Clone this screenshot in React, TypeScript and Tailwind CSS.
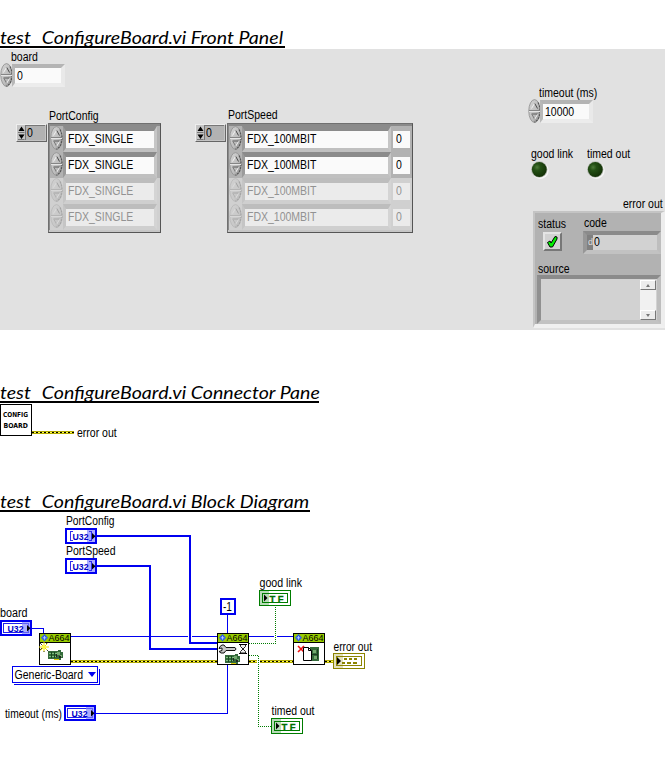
import React from "react";

const FONT = "'Liberation Sans', Arial, sans-serif";

function Label({ children, className = "" }: { children: React.ReactNode; className?: string }) {
  return (
    <span className={"block h-[14px] w-0 origin-left scale-x-[0.875] whitespace-nowrap text-[12px] leading-[14px] " + className}>
      {children}
    </span>
  );
}

function Heading({ children, className }: { children: React.ReactNode; className: string }) {
  return (
    <h2 className={"h-[20px] border-b-2 border-black " + className}>
      <span className="block h-[18px] w-0 origin-left scale-x-[1.12] whitespace-nowrap font-['Lato',sans-serif] text-[17.5px] italic leading-[20px]">
        test<span className="relative top-[2px] mr-[2px]">_</span>{children}
      </span>
    </h2>
  );
}

function Knob() {
  return (
    <svg width="13" height="24" viewBox="0 0 13 24" className="shrink-0">
      <defs>
        <linearGradient id="knob" x1="0" x2="1" y1="0.1" y2="0.9">
          <stop offset="0" stopColor="#d4d4d4" />
          <stop offset="0.6" stopColor="#bcbcbc" />
          <stop offset="1" stopColor="#858585" />
        </linearGradient>
      </defs>
      <ellipse cx="6.500" cy="12" rx="5.700" ry="11.400" fill="url(#knob)" stroke="#939393" strokeWidth=".9" />
      <path d="M10 3.500Q14 12 10 20.500L6.500 23.400" fill="none" stroke="#555" strokeWidth="1.100" strokeDasharray="2 1" />
      <path d="M1 11.500h11" stroke="#858585" />
      <path d="M1 12.500h11" stroke="#e5e5e5" />
      <path d="M3.500 9.500l3-5" stroke="#f2f2f2" />
      <path d="M6.800 4.500l2.700 5" stroke="#4a4a4a" />
      <path d="M3.500 15h6" stroke="#5a5a5a" />
      <path d="M4 15.500l2.500 4.500" stroke="#777" />
      <path d="M6.800 20l2.700-4.500" stroke="#f2f2f2" />
    </svg>
  );
}

function NumericBox({ value, className }: { value: string; className: string }) {
  return (
    <div className={"h-[23px] border-t-[4px] border-r-[4px] border-b-[4px] border-l-[3px] border-t-[#b4b4b4] border-r-[#e9e9e9] border-b-[#ececec] border-l-[#b8b8b8] bg-[#fafafa] pl-[2px] " + className}>
      <Label className="mt-[1px]">{value}</Label>
    </div>
  );
}

function IndexBox() {
  return (
    <div className="mt-px flex h-[18px] w-[31px] shrink-0 border border-t-[#eee] border-l-[#eee] border-r-[#666] border-b-[#666] bg-[#c4c4c4]">
      <svg width="8" height="16" viewBox="0 0 8 16" className="shrink-0">
        <path d="M4.500 1.500L7.500 6H1.500zM1.500 9.500h6l-3 4.500z" fill="#000" />
        <path d="M1 7.500h6.500M1 14.500h6.500" stroke="#777" />
      </svg>
      <div className="h-[15px] w-[20px] border-t border-l border-[#777] bg-[#b2b2b2] pl-px">
        <Label>0</Label>
      </div>
    </div>
  );
}

function ArrayRow({ value, dim, field, extra }: { value: string; dim: boolean; field: string; extra?: boolean }) {
  const cell = dim ? "bg-[#ebebeb] text-[#929292]" : "bg-[#fafafa] text-black";
  return (
    <div className={"flex h-[26px] " + (dim ? "bg-[#d0d0d0]" : "bg-[#b2b2b2]")}>
      <div className={dim ? "opacity-35" : ""}>
        <Knob />
      </div>
      <div className={"h-[26px] border-t-[5px] border-r-[3px] border-b-[4px] border-l-[3px] " + (dim ? "border-t-[#bdbdbd] border-r-[#d4d4d4] border-b-[#cfcfcf] border-l-[#c5c5c5] " : "border-t-[#8b8b8b] border-r-[#c6c6c6] border-b-[#c0c0c0] border-l-[#9b9b9b] ") + field}>
        <div className={"h-[17px] pl-[2px] pt-px " + cell}>
          <Label>{value}</Label>
        </div>
      </div>
      {extra && (
        <div className={"mt-[5px] ml-[2px] h-[17px] w-[17px] pl-[3px] pt-px " + cell}>
          <Label>0</Label>
        </div>
      )}
    </div>
  );
}

function ArrayControl({ value, frame, field, extra }: { value: string; frame: string; field: string; extra?: boolean }) {
  return (
    <div className={"ml-px h-[110px] shrink-0 border border-t-[#707070] border-l-[#707070] border-r-[#555] border-b-[#555] bg-[#c6c6c6] pb-[2px] " + frame}>
      <div className="border-t-2 border-l-[1px] border-[#8a8a8a]">
        {[false, false, true, true].map((dim, i) => (
          <ArrayRow key={i} value={value} dim={dim} field={field} extra={extra} />
        ))}
      </div>
    </div>
  );
}

function Led() {
  return (
    <svg width="18" height="18" viewBox="0 0 18 18" className="block">
      <defs>
        <radialGradient id="led" cx="0.35" cy="0.35" r="0.65">
          <stop offset="0" stopColor="#4c7a38" />
          <stop offset="0.35" stopColor="#245015" />
          <stop offset="1" stopColor="#143307" />
        </radialGradient>
      </defs>
      <circle cx="9.300" cy="9.500" r="8.400" fill="#f6f6f6" />
      <circle cx="8.300" cy="8.500" r="8.200" fill="#b5b9b2" />
      <circle cx="8.300" cy="8.500" r="7.400" fill="url(#led)" />
    </svg>
  );
}

function ScrollButton({ up }: { up?: boolean }) {
  return (
    <div className="flex h-[10px] w-[16px] items-center justify-center border border-t-white border-l-white border-r-[#777] border-b-[#777] bg-[#ececec]">
      <svg width="5" height="3" viewBox="0 0 5 3">
        <path d={up ? "M0 3h4L2 0z" : "M0 0h4L2 3z"} fill="#777" />
      </svg>
    </div>
  );
}

function ErrorCluster() {
  return (
    <div className="ml-[5px] h-[117px] w-[132px] border-t-2 border-r-[4px] border-b-[4px] border-l-2 border-t-[#c4c4c4] border-l-[#c4c4c4] border-r-[#eee] border-b-[#f0f0f0] bg-[#b2b2b2]">
      <div className="flex h-[61px]">
        <div className="w-[48px] pl-[3px] pt-[4px]">
          <Label>status</Label>
          <div className="mt-px ml-[5px] flex h-[19px] w-[19px] items-center justify-center border-2 border-t-[#e5e5e5] border-l-[#e5e5e5] border-r-[#777] border-b-[#777] bg-[#d2d2d2]">
            <svg width="13" height="13" viewBox="0 0 13 13">
              <path d="M1.500 7.500L4 6l1 2 4-6.500 2 .5v2L6.500 12H4z" fill="#00f000" stroke="#000" />
            </svg>
          </div>
        </div>
        <div className="pt-[3px]">
          <Label className="ml-px">code</Label>
          <div className="mt-px flex h-[23px] w-[78px] border-t-[4px] border-r-[4px] border-b-[4px] border-l-[4px] border-t-[#8b8b8b] border-l-[#979797] border-r-[#bebebe] border-b-[#c2c2c2] bg-[#d2d2d2]">
            <div className="h-full w-[6px] bg-[#808080] pl-px text-[9px] leading-[15px] text-[#ddd]">d</div>
            <Label className="ml-px">0</Label>
          </div>
        </div>
      </div>
      <div className="h-[50px] pl-[2px]">
        <Label className="-mt-[12px] ml-px h-[14px]">source</Label>
        <div className="-mt-px flex h-[49px] w-[124px] justify-end border-[4px] border-t-[#8b8b8b] border-l-[#909090] border-r-[#bebebe] border-b-[#c2c2c2] bg-[#d2d2d2] pt-px pr-px">
          <div className="flex h-[40px] w-[16px] flex-col justify-between bg-[#f1f1f1]">
            <ScrollButton up />
            <ScrollButton />
          </div>
        </div>
      </div>
    </div>
  );
}

function FrontPanel() {
  return (
    <section className="relative mt-px flex h-[281px] w-[665px] bg-[#e1e1e1]">
      <div className="w-[528px]">
        <Label className="mt-px ml-[11px]">board</Label>
        <div className="-mt-px flex">
          <Knob />
          <NumericBox value="0" className="mt-px -ml-px w-[53px]" />
        </div>
        <div className="mt-[21px] flex">
          <div className="w-[179px]">
            <Label className="mt-px ml-[49px]">PortConfig</Label>
            <div className="ml-[16px] flex">
              <IndexBox />
              <ArrayControl value="FDX_SINGLE" frame="w-[113px]" field="w-[94px]" />
            </div>
          </div>
          <div>
            <Label className="ml-[49px]">PortSpeed</Label>
            <div className="mt-px ml-[16px] flex">
              <IndexBox />
              <ArrayControl value="FDX_100MBIT" frame="w-[186px]" field="w-[149px]" extra />
            </div>
          </div>
        </div>
      </div>
      <div className="w-[137px]">
        <Label className="mt-[37px] ml-[11px]">timeout (ms)</Label>
        <div className="-mt-px flex">
          <Knob />
          <NumericBox value="10000" className="mt-px -ml-px w-[53px]" />
        </div>
        <div className="mt-[24px] flex">
          <div className="w-[56px] pl-[3px]">
            <Label>good link</Label>
            <Led />
          </div>
          <div className="pl-[3px]">
            <Label>timed out</Label>
            <Led />
          </div>
        </div>
        <Label className="mt-[18px] ml-[95px]">error out</Label>
        <ErrorCluster />
      </div>
    </section>
  );
}

function T({ x, y, w, children }: { x: number; y: number; w: number; children: string }) {
  return (
    <text x={x} y={y} fontSize="12" textLength={w} lengthAdjust="spacingAndGlyphs">
      {children}
    </text>
  );
}

function ErrorWire({ x, y, w }: { x: number; y: number; w: number }) {
  return (
    <g shapeRendering="crispEdges">
      <rect x={x} y={y} width={w} height="3" fill="#b0a800" />
      <path d={`M${x} ${y + 1.5}h${w}`} stroke="#000" strokeDasharray="2 2" />
      <path d={`M${x + 2} ${y + 1.5}h${w - 2}`} stroke="#ffff50" strokeDasharray="2 2" />
    </g>
  );
}

function U32({ x, y, array }: { x: number; y: number; array?: boolean }) {
  return (
    <g transform={`translate(${x} ${y})`}>
      <g shapeRendering="crispEdges">
        <rect x="1" y="1" width="30" height="14" fill="#fff" stroke="#0000f0" strokeWidth="2" />
        {!array && <rect x="3.500" y="3.500" width="25" height="9" fill="none" stroke="#2020ee" />}
        <rect x="22" y="2" width="8" height="12" fill="#8080ff" fillOpacity="0.65" />
      </g>
      <text x="7.500" y="11.500" fontSize="9.500" fontWeight="bold" textLength="16" lengthAdjust="spacingAndGlyphs" fill="#0000c8">U32</text>
      {array && <path d="M7.500 3.500h-2v9h2M24 3.500h2v9h-2" fill="none" stroke="#3030ee" shapeRendering="crispEdges" />}
      <path d="M27 5v6.500l3.500-3.250z" fill="#000" />
    </g>
  );
}

function TF({ x, y }: { x: number; y: number }) {
  return (
    <g transform={`translate(${x} ${y})`}>
      <g shapeRendering="crispEdges">
        <rect x=".5" y=".5" width="31" height="15" fill="#fff" stroke="#007c00" />
        <rect x="3.500" y="3.500" width="25" height="9" fill="none" stroke="#007c00" />
        <rect x="1" y="1" width="9" height="14" fill="#007c00" fillOpacity="0.28" />
      </g>
      <path d="M5 4.500v7L8.500 8z" fill="#000" />
      <text x="10.500" y="11.500" fontSize="9.500" fontWeight="bold" textLength="14" fill="#007000" stroke="#007000" strokeWidth=".3">TF</text>
    </g>
  );
}

function BoardChip({ x, y }: { x: number; y: number }) {
  return (
    <g transform={`translate(${x} ${y})`} shapeRendering="crispEdges">
      <path d="M0 1h10V0h3v2h2v6h-2v2h-3V9H0z" fill="#356b3c" />
      <path d="M1 3.500h8M1 6.500h8" stroke="#80c080" />
      <path d="M3.500 2v6M6.500 2v6" stroke="#174820" />
      <path d="M9 2h3v3H9zM12 5h2v2h-2z" fill="#74aa70" />
      <path d="M8 4h1v3H8zM11 6h2v2h-2z" fill="#222" />
      <path d="M6 9h5v1H6z" fill="#dccb00" />
    </g>
  );
}

function SubVi({ x, children }: { x: number; children: React.ReactNode }) {
  return (
    <g transform={`translate(${x} 633)`}>
      <rect x=".5" y=".5" width="31" height="31" fill="#fff" stroke="#000" shapeRendering="crispEdges" />
      <path d="M1 1h30v8H1z" fill="#99cc00" shapeRendering="crispEdges" />
      <path d="M1 9.500h30" stroke="#000" shapeRendering="crispEdges" />
      <path d="M5.500 1l3.500 3.800-3.500 3.700L2 4.800z" fill="#3058e8" />
      <path d="M3.800 4.800h3.500M5.500 3v3.600" stroke="#c0e0ff" strokeWidth=".8" />
      <text x="9.500" y="8.300" fontSize="9.500" textLength="21" lengthAdjust="spacingAndGlyphs">A664</text>
      {children}
    </g>
  );
}

function BlockDiagram() {
  return (
    <svg width="665" height="247" viewBox="0 512 665 247" className="relative block bg-white" fontFamily={FONT}>
      <g fill="none" stroke="#0000f0" shapeRendering="crispEdges">
        <path d="M97 536H190V643H217M97 566H150V649H217" strokeWidth="2" />
        <path d="M32 628.500H43.500V634M71 636.500H188M192 636.500H217M249 636.500H274M277 636.500H293M227.500 615V633" />
        <path d="M96 713.500H227.500V665" />
      </g>
      <ErrorWire x={71} y={660} w={146} />
      <ErrorWire x={249} y={660} w={8} />
      <ErrorWire x={260} y={660} w={33} />
      <ErrorWire x={325} y={660} w={8} />
      <path d="M249 643.500H275.500V606M249 655.500H258.500V726.500H271" fill="none" stroke="#007c00" strokeDasharray="1 1" shapeRendering="crispEdges" />

      <T x={66} y={525} w={48.5}>PortConfig</T>
      <U32 x={65} y={528} array />
      <T x={66} y={555} w={49.5}>PortSpeed</T>
      <U32 x={65} y={558} array />
      <T x={0} y={617} w={27.5}>board</T>
      <U32 x={0} y={620} />
      <T x={5} y={718} w={57}>timeout (ms)</T>
      <U32 x={64} y={705} />

      <rect x="221" y="599" width="14" height="15" fill="#fff" stroke="#0000f0" strokeWidth="2" shapeRendering="crispEdges" />
      <T x={223} y={611} w={9}>-1</T>

      <T x={259.5} y={587} w={42.5}>good link</T>
      <TF x={259} y={590} />
      <T x={271.5} y={715} w={43}>timed out</T>
      <TF x={271} y={718} />

      <SubVi x={39}>
        <path d="M5 9v10M0 14h10M1.500 10.500l7 7M8.500 10.500l-7 7" stroke="#f0e000" />
        <path d="M1 10l2 2M8 10l-1 1M1 17l2-2M9 18l-1-1M5 18v1" stroke="#444" />
        <circle cx="5" cy="14" r="1.500" fill="#ffff30" />
        <BoardChip x={9} y={17} />
      </SubVi>
      <SubVi x={217}>
        <path d="M3 13.500l2-1.500h2l2 2.500h9q2 1.500 0 3H9L7 20H4l-2-1.500 3-1V15l-3 .5z" fill="#c8c8c8" stroke="#111" />
        <path d="M22 11.500h8M22 20.500h8" stroke="#000" shapeRendering="crispEdges" />
        <path d="M23.500 12v1.500L28.500 18.500V20h-5v-1.500l5-5V12" fill="#eee" stroke="#222" />
        <BoardChip x={8} y={21} />
      </SubVi>
      <SubVi x={293}>
        <path d="M5 13l6 6M11 13l-6 6" stroke="#f01010" strokeWidth="1.600" />
        <g shapeRendering="crispEdges">
          <path d="M17 14h9v14h-9z" fill="#356b3c" />
          <path d="M20 17h3v3h-3zM21 23h3v3h-3z" fill="#74aa70" />
          <path d="M24.500 16v10M19 21.500h5" stroke="#1c3d22" />
        </g>
        <path d="M10.500 14.500h5l3 3v10h-8z" fill="#fff" stroke="#000" />
        <path d="M15.500 14.500v3h3" fill="none" stroke="#000" />
      </SubVi>

      <g shapeRendering="crispEdges">
        <path d="M99.500 669V684.500H14" fill="none" stroke="#0000f0" />
        <rect x="12.500" y="666.500" width="85" height="16" fill="#fff" stroke="#0000f0" />
      </g>
      <path d="M88 672h8l-4 5z" fill="#0000f0" />
      <T x={14.5} y={679} w={68.5}>Generic-Board</T>

      <T x={333.5} y={651} w={38.5}>error out</T>
      <g shapeRendering="crispEdges">
        <rect x="333.500" y="653.500" width="31" height="15" fill="#fff" stroke="#8c8400" />
        <rect x="336.500" y="656.500" width="25" height="9" fill="none" stroke="#8c8400" />
        <rect x="334" y="654" width="9" height="14" fill="#8c8400" fillOpacity=".25" />
        <path d="M344 659h3M349 659h3M354 659h3M342 663h3M347 663h4M353 663h4" stroke="#8c8400" strokeWidth="2" />
      </g>
      <path d="M337 657v8l4-4z" fill="#000" />
    </svg>
  );
}

export default function App() {
  return (
    <main className="h-[759px] w-[665px] bg-white pt-[28px] font-['Liberation_Sans',Arial,sans-serif] text-black">
      <Heading className="w-[285px]">ConfigureBoard.vi Front Panel</Heading>
      <FrontPanel />
      <Heading className="mt-[53px] w-[319px]">ConfigureBoard.vi Connector Pane</Heading>
      <section className="relative mt-px flex h-[88px] bg-white">
        <div className="h-[32px] w-[32px] border border-black">
          <svg width="30" height="30" viewBox="1 405 30 30" className="overflow-visible" fontFamily="'DejaVu Sans', sans-serif" fontSize="6.8" fontWeight="bold">
            <text x="3" y="417" textLength="25" lengthAdjust="spacingAndGlyphs">CONFIG</text>
            <text x="3.500" y="428" textLength="24.500" lengthAdjust="spacingAndGlyphs">BOARD</text>
          </svg>
        </div>
        <svg width="42" height="3" viewBox="0 0 42 3" className="mt-[27px]">
          <ErrorWire x={0} y={0} w={42} />
        </svg>
        <Label className="mt-[22px] ml-[3px]">error out</Label>
      </section>
      <Heading className="w-[310px]">ConfigureBoard.vi Block Diagram</Heading>
      <BlockDiagram />
    </main>
  );
}
